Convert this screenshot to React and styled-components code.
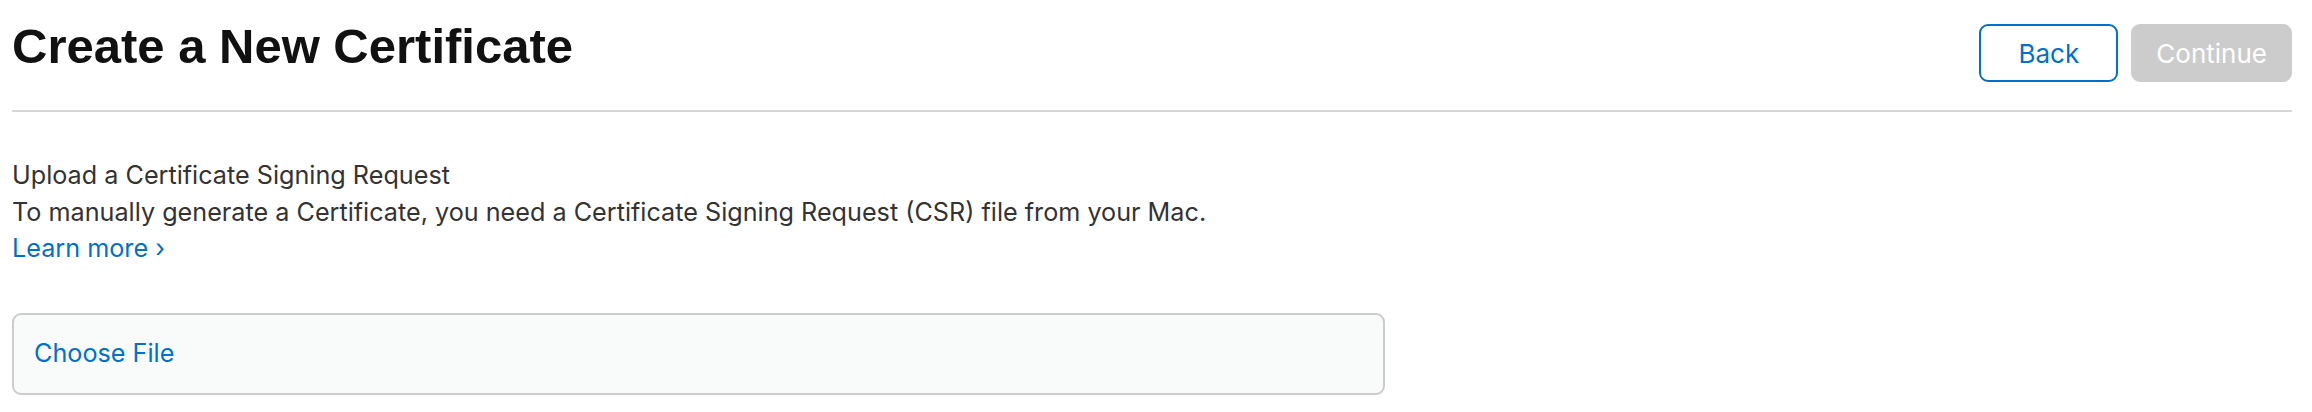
import React from "react";
import styled, { createGlobalStyle } from "styled-components";

const GlobalStyle = createGlobalStyle`
  html, body {
    margin: 0;
    padding: 0;
    background: #fff;
  }
  body {
    font-family: Inter, "Liberation Sans", Arial, sans-serif;
    color: #333;
    -webkit-font-smoothing: antialiased;
  }
`;

const Page = styled.div`
  padding: 0 20px 0 12px;
`;

const Header = styled.header`
  display: flex;
  justify-content: space-between;
  align-items: flex-start;
  padding-top: 24px;
  padding-bottom: 28px;
  border-bottom: 2px solid #d6d6d6;
`;

const Title = styled.h1`
  margin: 0;
  font-family: "Liberation Sans", Arial, sans-serif;
  font-size: 49px;
  line-height: 44px;
  font-weight: 700;
  color: #111;
`;

const ButtonGroup = styled.div`
  display: flex;
  gap: 13px;
`;

const Button = styled.button`
  box-sizing: border-box;
  height: 58px;
  min-width: ${(props) => props.minWidth || 0}px;
  padding: 0 23px;
  border-radius: 9px;
  font-family: inherit;
  font-size: 26px;
  cursor: pointer;
  border: 2px solid ${(props) => (props.disabled ? "#ccc" : "#0070c9")};
  background: ${(props) => (props.disabled ? "#ccc" : "#fff")};
  color: ${(props) => (props.disabled ? "#fff" : "#0070c9")};
`;

const Section = styled.section`
  margin-top: 45px;
  font-size: 25.2px;
  line-height: 36.5px;
`;

const SectionTitle = styled.h3`
  margin: 0;
  font-size: inherit;
  font-weight: 400;
  color: #333;
`;

const Text = styled.p`
  margin: 0;
`;

const LearnMore = styled.a`
  display: inline-block;
  color: #0070c9;
  text-decoration: none;
`;

const FileBox = styled.div`
  box-sizing: border-box;
  display: flex;
  align-items: center;
  width: 1373px;
  height: 82px;
  margin-top: 46px;
  padding: 0 20px;
  border: 2px solid #ccc;
  border-radius: 9px;
  background: #f9fafa;
`;

const ChooseFile = styled.span`
  font-size: 25.2px;
  color: #0070c9;
  cursor: pointer;
`;

export default function App() {
  return (
    <>
      <GlobalStyle />
      <Page>
        <Header>
          <Title>Create a New Certificate</Title>
          <ButtonGroup>
            <Button minWidth={139}>Back</Button>
            <Button disabled>Continue</Button>
          </ButtonGroup>
        </Header>
        <Section>
          <SectionTitle>Upload a Certificate Signing Request</SectionTitle>
          <Text>
            To manually generate a Certificate, you need a Certificate Signing
            Request (CSR) file from your Mac.
          </Text>
          <LearnMore href="#">Learn more ›</LearnMore>
          <FileBox>
            <ChooseFile>Choose File</ChooseFile>
          </FileBox>
        </Section>
      </Page>
    </>
  );
}
